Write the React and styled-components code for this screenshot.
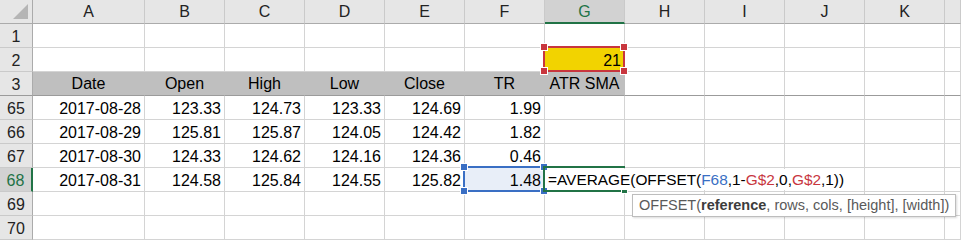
import { Fragment } from 'react';
import styled, { createGlobalStyle } from 'styled-components';

const GlobalStyle = createGlobalStyle`
  html, body {
    margin: 0;
    background: #ffffff;
  }
  body {
    font-family: "Liberation Sans", Arial, sans-serif;
    color: #000000;
  }
`;

const GRID = '#d4d4d4';
const HEAD_LINE = '#ababab';
const GREEN = '#217346';
const BLUE = '#3a6fc4';
const RED = '#c8363e';

const Sheet = styled.div`
  display: grid;
  grid-template-columns: 33px 112px repeat(10, 80px) 1fr;
  grid-auto-rows: 24px;
  width: 961px;
  height: 240px;
  overflow: hidden;
  position: relative;
  font-size: 16px;
`;

const Corner = styled.div`
  position: relative;
  background: #e6e6e6;
  border-right: 1px solid ${HEAD_LINE};
  border-bottom: 1px solid ${HEAD_LINE};
  box-sizing: border-box;
  &::after {
    content: '';
    position: absolute;
    right: 4px;
    bottom: 4px;
    width: 0;
    height: 0;
    border-left: 15px solid transparent;
    border-bottom: 15px solid #b5b5b5;
  }
`;

const ColHead = styled.div`
  box-sizing: border-box;
  background: ${(p) => (p.$active ? '#d2d2d2' : '#e6e6e6')};
  color: ${(p) => (p.$active ? GREEN : '#222222')};
  border-right: 1px solid #cacaca;
  border-bottom: ${(p) => (p.$active ? `2px solid ${GREEN}` : `1px solid ${HEAD_LINE}`)};
  text-align: center;
  line-height: 23px;
  font-size: 16px;
`;

const RowHead = styled.div`
  box-sizing: border-box;
  background: ${(p) => (p.$active ? '#d2d2d2' : '#e6e6e6')};
  color: ${(p) => (p.$active ? GREEN : '#222222')};
  border-right: ${(p) => (p.$active ? `2px solid ${GREEN}` : `1px solid ${HEAD_LINE}`)};
  border-bottom: 1px solid ${(p) => (p.$frozen ? '#9b9b9b' : '#cacaca')};
  display: flex;
  align-items: flex-end;
  justify-content: center;
  padding-bottom: 1px;
  line-height: 18px;
  font-size: 16px;
`;

const Cell = styled.div`
  position: relative;
  box-sizing: border-box;
  background: ${(p) => p.$bg || '#ffffff'};
  border-right: 1px solid ${(p) => p.$bg || GRID};
  border-bottom: 1px solid ${(p) => (p.$frozen ? '#9b9b9b' : GRID)};
  display: flex;
  align-items: flex-end;
  justify-content: ${(p) => (p.$center ? 'center' : 'flex-end')};
  padding: 0 3px ${(p) => (p.$center ? '2px' : '1px')} 3px;
  line-height: 18px;
  white-space: nowrap;
`;

const RangeBox = styled.div`
  position: absolute;
  left: -2px;
  top: -2px;
  right: -1px;
  bottom: -1px;
  border: 2px solid ${(p) => p.$color};
  background: ${(p) => p.$fill || 'transparent'};
  z-index: 2;
  pointer-events: none;
`;

const Handle = styled.span`
  position: absolute;
  width: 6px;
  height: 6px;
  background: ${(p) => p.$color};
  border: 1px solid #ffffff;
  ${(p) => (p.$top ? 'top: -5px;' : 'bottom: -5px;')}
  ${(p) => (p.$left ? 'left: -5px;' : 'right: -5px;')}
`;

const CellValue = styled.span`
  position: relative;
  z-index: 3;
`;

const EditBox = styled.div`
  position: absolute;
  left: -2px;
  top: -2px;
  right: -1px;
  bottom: -1px;
  border-top: 2px solid ${GREEN};
  border-bottom: 2px solid ${GREEN};
  border-left: 2px solid ${GREEN};
  z-index: 4;
`;

const FillHandle = styled.span`
  position: absolute;
  right: -3px;
  bottom: -4px;
  width: 5px;
  height: 5px;
  background: ${GREEN};
  border: 1px solid #ffffff;
`;

const Formula = styled.span`
  position: absolute;
  left: 3px;
  top: 1px;
  height: 21px;
  padding-right: 2px;
  background: #ffffff;
  z-index: 5;
  font-size: 15.4px;
  line-height: 22px;
  white-space: nowrap;
`;

const Ref = styled.span`
  color: ${(p) => p.$color};
`;

const Tooltip = styled.div`
  position: absolute;
  left: 632px;
  top: 194px;
  width: 324px;
  height: 23px;
  box-sizing: border-box;
  background: #ffffff;
  border: 1px solid #bdbdbd;
  box-shadow: 1px 1px 2px rgba(0, 0, 0, 0.15);
  padding-left: 6px;
  font-size: 14.5px;
  line-height: 21px;
  color: #5a5a5a;
  white-space: nowrap;
  z-index: 6;
  b {
    color: #3c3c3c;
  }
`;

const letters = ['A', 'B', 'C', 'D', 'E', 'F', 'G', 'H', 'I', 'J', 'K', ''];

const titles = ['Date', 'Open', 'High', 'Low', 'Close', 'TR', 'ATR SMA'];

const data = [
  [65, '2017-08-28', '123.33', '124.73', '123.33', '124.69', '1.99'],
  [66, '2017-08-29', '125.81', '125.87', '124.05', '124.42', '1.82'],
  [67, '2017-08-30', '124.33', '124.62', '124.16', '124.36', '0.46'],
  [68, '2017-08-31', '124.58', '125.84', '124.55', '125.82', '1.48'],
];

const Handles = ({ color }) => (
  <>
    <Handle $color={color} $top $left />
    <Handle $color={color} $top />
    <Handle $color={color} $left />
    <Handle $color={color} />
  </>
);

const blankRow = (row, opts = {}) =>
  letters.map((l, i) => <Cell key={`${row}-${i}`} $frozen={opts.frozen} />);

const App = () => {
  return (
    <>
      <GlobalStyle />
      <Sheet>
        <Corner />
        {letters.map((l, i) => (
          <ColHead key={`h${i}`} $active={l === 'G'}>
            {l}
          </ColHead>
        ))}

        <RowHead>1</RowHead>
        {blankRow(1)}

        <RowHead>2</RowHead>
        {letters.map((l, i) =>
          l === 'G' ? (
            <Cell key="2-g" $bg="#f2d300">
              <RangeBox $color={RED}>
                <Handles color={RED} />
              </RangeBox>
              <CellValue>21</CellValue>
            </Cell>
          ) : (
            <Cell key={`2-${i}`} />
          )
        )}

        <RowHead $frozen>3</RowHead>
        {letters.map((l, i) =>
          i < titles.length ? (
            <Cell key={`3-${i}`} $bg="#bfbfbf" $center $frozen>
              {titles[i]}
            </Cell>
          ) : (
            <Cell key={`3-${i}`} $frozen />
          )
        )}

        {data.map(([n, ...vals]) => (
          <Fragment key={n}>
            <RowHead $active={n === 68}>{n}</RowHead>
            {letters.map((l, i) => {
              if (n === 68 && l === 'F') {
                return (
                  <Cell key={`${n}-${i}`}>
                    <RangeBox $color={BLUE} $fill="#e8eef8">
                      <Handles color={BLUE} />
                    </RangeBox>
                    <CellValue>{vals[i]}</CellValue>
                  </Cell>
                );
              }
              if (n === 68 && l === 'G') {
                return (
                  <Cell key={`${n}-${i}`}>
                    <EditBox>
                      <FillHandle />
                    </EditBox>
                    <Formula>
                      =AVERAGE(OFFSET(<Ref $color={BLUE}>F68</Ref>,1-
                      <Ref $color={RED}>G$2</Ref>,0,<Ref $color={RED}>G$2</Ref>,1))
                    </Formula>
                  </Cell>
                );
              }
              return <Cell key={`${n}-${i}`}>{vals[i] || ''}</Cell>;
            })}
          </Fragment>
        ))}

        <RowHead>69</RowHead>
        {blankRow(69)}
        <RowHead>70</RowHead>
        {blankRow(70)}

        <Tooltip>
          OFFSET(<b>reference</b>, rows, cols, [height], [width])
        </Tooltip>
      </Sheet>
    </>
  );
};

export default App;
